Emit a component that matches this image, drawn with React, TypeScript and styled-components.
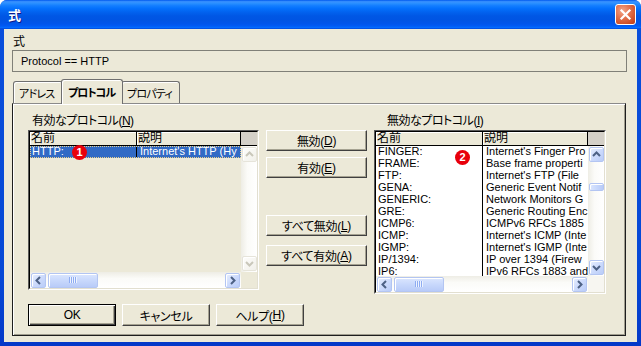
import React from "react";
import styled, { createGlobalStyle, css } from "styled-components";

const GlobalStyle = createGlobalStyle`
  html, body { margin: 0; padding: 0; background: #ffffff; }
  * { box-sizing: border-box; }
`;

const Window = styled.div`
  width: 641px;
  height: 346px;
  display: flex;
  flex-direction: column;
  overflow: hidden;
  border-radius: 7px 7px 0 0;
  background: linear-gradient(to bottom, #0A4FDC 0%, #0648D6 80%, #0438C8 100%);
  font-family: "Liberation Sans", "Noto Sans CJK JP", sans-serif;
  font-size: 11px;
  color: #000;
  font-feature-settings: "palt";
`;

const TitleBar = styled.div`
  flex: none;
  height: 29px;
  display: flex;
  align-items: center;
  justify-content: space-between;
  padding: 0 5px 0 8px;
  background: linear-gradient(
    to bottom,
    #0058ee 0%,
    #3a93ff 6%,
    #288eff 12%,
    #127dff 20%,
    #036ffc 30%,
    #0262ee 42%,
    #0057e5 55%,
    #0054e3 70%,
    #0055eb 82%,
    #005bf5 90%,
    #026afe 95%,
    #0046d8 100%
  );
`;

const Title = styled.span`
  color: #fff;
  font-family: "Noto Sans CJK JP", sans-serif;
  font-weight: bold;
  font-size: 13px;
  text-shadow: 1px 1px 0 #0a1a8a;
`;

const CloseButton = styled.div`
  width: 21px;
  height: 21px;
  border: 1px solid #fff;
  border-radius: 3px;
  background: radial-gradient(circle at 35% 30%, #f3a68a 0%, #e3734f 40%, #cd4b23 80%, #b83a17 100%);
  display: flex;
  align-items: center;
  justify-content: center;
`;

const Client = styled.div`
  flex: 1;
  margin: 0 4px 4px;
  background: #ece9d8;
  padding: 6px 10px 0 8px;
  display: flex;
  flex-direction: column;
`;

const FieldLabel = styled.div`
  height: 14px;
  line-height: 14px;
  font-size: 12px;
  padding-left: 1px;
`;

const ExprBox = styled.div`
  margin-top: 1px;
  width: 615px;
  height: 22px;
  line-height: 20px;
  border: 1px solid #808078;
  padding-left: 8px;
  font-size: 11px;
`;

const TabStrip = styled.div`
  margin-top: 7px;
  height: 24px;
  display: flex;
  align-items: flex-end;
  padding-left: 1px;
  position: relative;
  z-index: 2;
`;

const Tab = styled.div<{ $active?: boolean; $w: number }>`
  width: ${(p) => p.$w}px;
  height: 22px;
  border: 1px solid #6f6f6f;
  border-bottom: none;
  border-radius: 3px 3px 0 0;
  background: #ece9d8;
  box-shadow: inset 1px 1px 0 #ffffff;
  padding-left: 5px;
  display: flex;
  align-items: center;
  font-size: 11px;
  letter-spacing: -0.8px;
  white-space: nowrap;
  ${(p) =>
    p.$active &&
    css`
      height: 25px;
      margin: 0 -2px -1px;
      font-weight: bold;
      position: relative;
      z-index: 3;
      padding-left: 6px;
      letter-spacing: -1px;
    `}
`;

const Panel = styled.div`
  width: 614px;
  height: 233px;
  border: 1px solid #1e1e1e;
  border-top-color: #8a8a8a;
  box-shadow: inset 1px 1px 0 #ffffff, inset -1px -1px 0 #a09d8e;
  padding: 11px 0 0 15px;
  display: flex;
  flex-direction: column;
`;

const UpperRow = styled.div`
  display: flex;
  align-items: flex-start;
`;

const Group = styled.div<{ $ml?: number }>`
  display: flex;
  flex-direction: column;
  margin-left: ${(p) => p.$ml ?? 0}px;
`;

const GroupLabel = styled.div<{ $indent: number }>`
  height: 13px;
  line-height: 13px;
  margin-bottom: 2px;
  padding-left: ${(p) => p.$indent}px;
  font-size: 12px;
  letter-spacing: -0.5px;
  white-space: nowrap;
`;

const Mnemonic = styled.span`
  text-decoration: underline;
`;

const ListBox = styled.div<{ $w: number; $h: number }>`
  position: relative;
  flex: none;
  width: ${(p) => p.$w}px;
  height: ${(p) => p.$h}px;
  border: 1px solid;
  border-color: #5a5a5a #ffffff #ffffff #5a5a5a;
`;

const ListInner = styled.div<{ $cols: string; $bg: string }>`
  width: 100%;
  height: 100%;
  border: 1px solid;
  border-color: #000000 #e2dfd0 #e2dfd0 #000000;
  background: ${(p) => p.$bg};
  display: grid;
  grid-template-columns: ${(p) => p.$cols};
  grid-template-rows: 14px 1fr 16px;
  overflow: hidden;
`;

const Header = styled.div`
  display: flex;
`;

const HeaderCell = styled.div<{ $w: number }>`
  width: ${(p) => p.$w}px;
  height: 14px;
  flex: none;
  background: #ece9d8;
  border-right: 1px solid #000;
  border-bottom: 1px solid #000;
  box-shadow: inset 1px 1px 0 #ffffff;
  padding-left: 1px;
  line-height: 13px;
  font-size: 12px;
`;

const HeaderCorner = styled.div`
  background: #d4d0c8;
  border-bottom: 1px solid #000;
`;

const Body = styled.div`
  overflow: hidden;
`;

const Row = styled.div<{ $cols: string; $selected?: boolean }>`
  display: grid;
  grid-template-columns: ${(p) => p.$cols};
  height: 12px;
  line-height: 11px;
  font-size: 11px;
  ${(p) =>
    p.$selected &&
    css`
      background: #316ac5;
      color: #fff;
      outline: 1px dotted #e8cf8a;
      outline-offset: -1px;
    `}
`;

const Cell = styled.div<{ $divider?: boolean }>`
  overflow: hidden;
  white-space: nowrap;
  padding-left: ${(p) => (p.$divider ? 2 : 3)}px;
  ${(p) => p.$divider && css`border-right: 1px solid #000;`}
`;

const VScroll = styled.div`
  display: flex;
  flex-direction: column;
  padding: 1px 0 1px 1px;
  background: linear-gradient(to right, #eeede5 0%, #fbfbf8 40%, #ffffff 100%);
`;

const HScroll = styled.div`
  display: flex;
  align-items: center;
  padding: 0 1px 0 1px;
  background: linear-gradient(to bottom, #eeede5 0%, #fbfbf8 40%, #ffffff 100%);
`;

const Corner = styled.div<{ $bg: string }>`
  background: ${(p) => p.$bg};
`;

const Spacer = styled.div`
  flex: 1;
`;

const ScrollButton = styled.div<{ $disabled?: boolean }>`
  width: 15px;
  height: 15px;
  flex: none;
  border: 1px solid ${(p) => (p.$disabled ? "#e6e4da" : "#b3c5f2")};
  border-radius: 2px;
  background: ${(p) =>
    p.$disabled
      ? "linear-gradient(135deg, #fdfdfb 0%, #f1f0ea 100%)"
      : "linear-gradient(135deg, #e8effe 0%, #cddbfc 50%, #b9ccf8 100%)"};
  box-shadow: inset 1px 1px 0 #ffffff;
  display: flex;
  align-items: center;
  justify-content: center;
`;

const HThumb = styled.div`
  width: 50px;
  height: 15px;
  margin-left: 2px;
  flex: none;
  border: 1px solid #b3c5f2;
  border-radius: 2px;
  background: linear-gradient(to bottom, #dbe6fe 0%, #c8d8fc 50%, #b8cbf8 100%);
  box-shadow: inset 1px 1px 0 #ffffff;
  display: flex;
  align-items: center;
  justify-content: center;
`;

const VThumb = styled.div`
  width: 15px;
  height: 8px;
  margin-top: 21px;
  flex: none;
  border: 1px solid #b3c5f2;
  border-radius: 2px;
  background: linear-gradient(to right, #dbe6fe 0%, #c8d8fc 50%, #b8cbf8 100%);
  box-shadow: inset 1px 1px 0 #ffffff;
`;

const Grip = styled.div`
  width: 8px;
  height: 6px;
  background: repeating-linear-gradient(to right, #8eacf2 0 1px, #eef3fe 1px 2px);
`;

const ButtonColumn = styled.div`
  margin-left: 7px;
  margin-top: 15px;
  display: flex;
  flex-direction: column;
`;

const PushButton = styled.div<{ $w: number; $h: number; $mt?: number; $default?: boolean }>`
  width: ${(p) => p.$w}px;
  height: ${(p) => p.$h}px;
  margin-top: ${(p) => p.$mt ?? 0}px;
  flex: none;
  display: flex;
  align-items: center;
  justify-content: center;
  background: #ece9d8;
  font-size: 12px;
  letter-spacing: -0.3px;
  white-space: nowrap;
  border: 1px solid;
  border-color: #ffffff #404040 #404040 #ffffff;
  box-shadow: inset -1px -1px 0 #a5a291;
  ${(p) =>
    p.$default &&
    css`
      border-color: #000;
      box-shadow: inset 1px 1px 0 #ffffff, inset -1px -1px 0 #404040, inset -2px -2px 0 #a5a291;
    `}
`;

const BottomRow = styled.div`
  margin-top: 10px;
  display: flex;
  gap: 6px;
`;

const Badge = styled.div<{ $x: number; $y: number }>`
  position: absolute;
  left: ${(p) => p.$x}px;
  top: ${(p) => p.$y}px;
  width: 15px;
  height: 15px;
  border-radius: 50%;
  background: #e8000b;
  color: #fff;
  font-family: "Liberation Sans", sans-serif;
  font-weight: bold;
  font-size: 11px;
  line-height: 15px;
  text-align: center;
`;

type Dir = "up" | "down" | "left" | "right";

const chevrons: Record<Dir, string> = {
  up: "3,8 6.5,4.5 10,8",
  down: "3,5 6.5,8.5 10,5",
  left: "8,3 4.5,6.5 8,10",
  right: "5,3 8.5,6.5 5,10",
};

function Arrow({ dir, disabled }: { dir: Dir; disabled?: boolean }) {
  return (
    <ScrollButton $disabled={disabled}>
      <svg width="13" height="13" viewBox="0 0 13 13">
        <polyline
          points={chevrons[dir]}
          fill="none"
          stroke={disabled ? "#c9c7ba" : "#4d6185"}
          strokeWidth="2"
        />
      </svg>
    </ScrollButton>
  );
}

type Item = { name: string; desc: string; selected?: boolean };

const enabled: Item[] = [
  { name: "HTTP:", desc: "Internet's HTTP (Hy", selected: true },
];

const disabled: Item[] = [
  { name: "FINGER:", desc: "Internet's Finger Pro" },
  { name: "FRAME:", desc: "Base frame properti" },
  { name: "FTP:", desc: "Internet's FTP (File" },
  { name: "GENA:", desc: "Generic Event Notif" },
  { name: "GENERIC:", desc: "Network Monitors G" },
  { name: "GRE:", desc: "Generic Routing Enc" },
  { name: "ICMP6:", desc: "ICMPv6 RFCs 1885" },
  { name: "ICMP:", desc: "Internet's ICMP (Inte" },
  { name: "IGMP:", desc: "Internet's IGMP (Inte" },
  { name: "IP/1394:", desc: "IP over 1394 (Firew" },
  { name: "IP6:", desc: "IPv6 RFCs 1883 and" },
];

function ProtocolList({
  w,
  h,
  nameW,
  descW,
  bg,
  cornerBg,
  items,
  vDisabled,
  badge,
}: {
  w: number;
  h: number;
  nameW: number;
  descW: number;
  bg: string;
  cornerBg: string;
  items: Item[];
  vDisabled?: boolean;
  badge: { n: string; x: number; y: number };
}) {
  const rowCols = `${nameW}px ${descW}px`;
  return (
    <ListBox $w={w} $h={h}>
      <ListInner $cols={`${nameW + descW}px 16px`} $bg={bg}>
        <Header>
          <HeaderCell $w={nameW}>名前</HeaderCell>
          <HeaderCell $w={descW}>説明</HeaderCell>
        </Header>
        <HeaderCorner />
        <Body>
          {items.map((it) => (
            <Row key={it.name} $cols={rowCols} $selected={it.selected}>
              <Cell $divider>{it.name}</Cell>
              <Cell>{it.desc}</Cell>
            </Row>
          ))}
        </Body>
        <VScroll>
          <Arrow dir="up" disabled={vDisabled} />
          {!vDisabled && <VThumb />}
          <Spacer />
          <Arrow dir="down" disabled={vDisabled} />
        </VScroll>
        <HScroll>
          <Arrow dir="left" />
          <HThumb>
            <Grip />
          </HThumb>
          <Spacer />
          <Arrow dir="right" />
        </HScroll>
        <Corner $bg={cornerBg} />
      </ListInner>
      <Badge $x={badge.x} $y={badge.y}>
        {badge.n}
      </Badge>
    </ListBox>
  );
}

export default function App() {
  return (
    <>
      <GlobalStyle />
      <Window>
        <TitleBar>
          <Title>式</Title>
          <CloseButton>
            <svg width="13" height="13" viewBox="0 0 13 13">
              <path d="M2.5 2.5 L10.5 10.5 M10.5 2.5 L2.5 10.5" stroke="#fff" strokeWidth="2.2" strokeLinecap="square" />
            </svg>
          </CloseButton>
        </TitleBar>
        <Client>
          <FieldLabel>式</FieldLabel>
          <ExprBox>Protocol == HTTP</ExprBox>
          <TabStrip>
            <Tab $w={50}>アドレス</Tab>
            <Tab $w={62} $active>
              プロトコル
            </Tab>
            <Tab $w={59}>プロパティ</Tab>
          </TabStrip>
          <Panel>
            <UpperRow>
              <Group>
                <GroupLabel $indent={4}>
                  有効なプロトコル(<Mnemonic>N</Mnemonic>)
                </GroupLabel>
                <ProtocolList
                  w={231}
                  h={160}
                  nameW={107}
                  descW={104}
                  bg="#ece9d8"
                  cornerBg="#ece9d8"
                  items={enabled}
                  vDisabled
                  badge={{ n: "1", x: 43, y: 14 }}
                />
              </Group>
              <ButtonColumn>
                <PushButton $w={101} $h={21}>
                  無効(<Mnemonic>D</Mnemonic>)
                </PushButton>
                <PushButton $w={101} $h={21} $mt={6}>
                  有効(<Mnemonic>E</Mnemonic>)
                </PushButton>
                <PushButton $w={101} $h={21} $mt={37}>
                  すべて無効(<Mnemonic>L</Mnemonic>)
                </PushButton>
                <PushButton $w={101} $h={21} $mt={9}>
                  すべて有効(<Mnemonic>A</Mnemonic>)
                </PushButton>
              </ButtonColumn>
              <Group $ml={7}>
                <GroupLabel $indent={13}>
                  無効なプロトコル(<Mnemonic>I</Mnemonic>)
                </GroupLabel>
                <ProtocolList
                  w={232}
                  h={164}
                  nameW={107}
                  descW={105}
                  bg="#ffffff"
                  cornerBg="#f7f6f1"
                  items={disabled}
                  badge={{ n: "2", x: 80, y: 19 }}
                />
              </Group>
            </UpperRow>
            <BottomRow>
              <PushButton $w={88} $h={22} $default>
                OK
              </PushButton>
              <PushButton $w={88} $h={22}>
                キャンセル
              </PushButton>
              <PushButton $w={88} $h={22}>
                ヘルプ(<Mnemonic>H</Mnemonic>)
              </PushButton>
            </BottomRow>
          </Panel>
        </Client>
      </Window>
    </>
  );
}
